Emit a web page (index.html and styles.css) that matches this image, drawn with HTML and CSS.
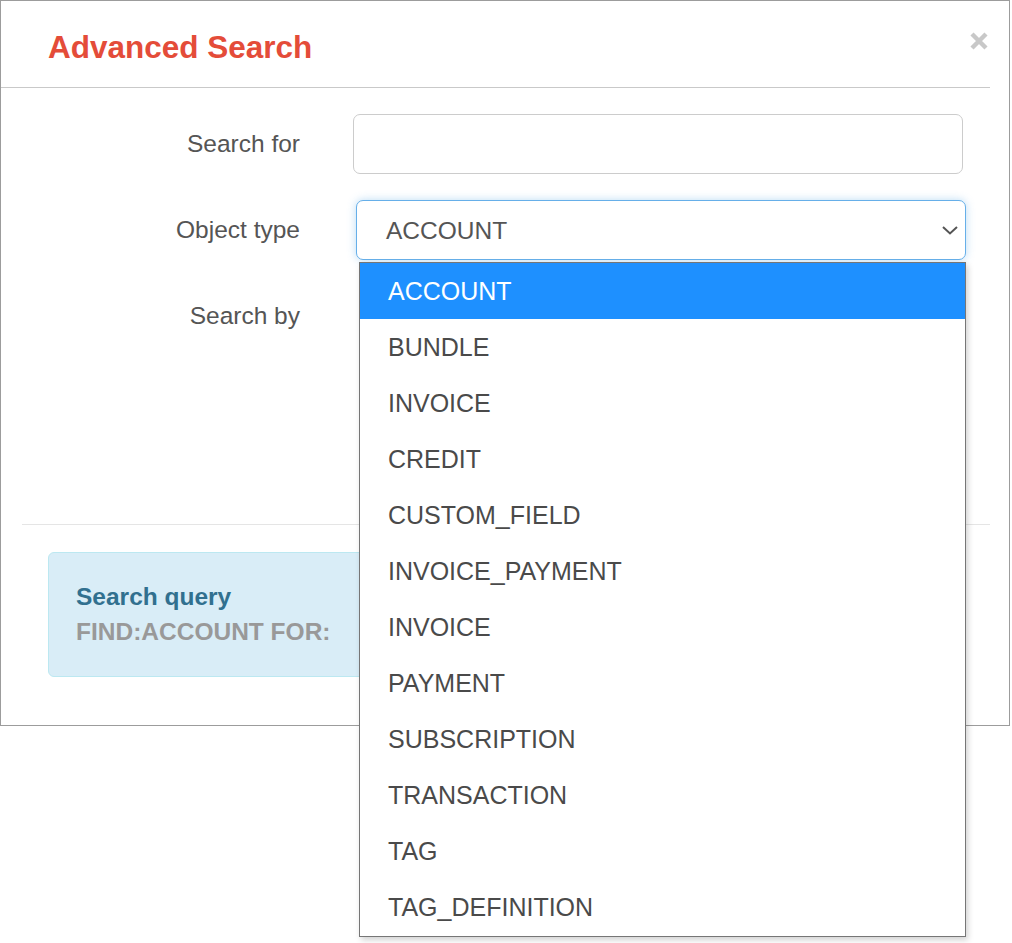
FILE: index.html
```html
<!DOCTYPE html>
<html>
<head>
<meta charset="utf-8">
<link rel="stylesheet" href="styles.css">
</head>
<body>
<div class="modal">
  <div class="modal-header">
    <h4 class="modal-title">Advanced Search</h4>
    <span class="close" aria-label="Close">
      <svg width="18" height="18" viewBox="0 0 18 18"><path d="M2 2 L16 16 M16 2 L2 16" stroke="#c8c8c8" stroke-width="4.4" stroke-linecap="butt" fill="none"/></svg>
    </span>
  </div>
  <div class="modal-body">
    <div class="form-row">
      <label class="form-label">Search for</label>
      <div class="form-control input"></div>
    </div>
    <div class="form-row">
      <label class="form-label">Object type</label>
      <div class="form-control select">
        <span class="select-value">ACCOUNT</span>
        <svg class="chevron" width="16" height="9" viewBox="0 0 16 9"><polyline points="1,1 8,7.5 15,1" fill="none" stroke="#555" stroke-width="2"/></svg>
      </div>
    </div>
    <div class="form-row tall">
      <label class="form-label">Search by</label>
      <div class="hidden-area"></div>
    </div>
  </div>
  <hr class="divider">
  <div class="alert">
    <div class="alert-title">Search query</div>
    <div class="alert-query">FIND:ACCOUNT FOR:</div>
  </div>
</div>

<ul class="dropdown">
  <li class="option active">ACCOUNT</li>
  <li class="option">BUNDLE</li>
  <li class="option">INVOICE</li>
  <li class="option">CREDIT</li>
  <li class="option">CUSTOM_FIELD</li>
  <li class="option">INVOICE_PAYMENT</li>
  <li class="option">INVOICE</li>
  <li class="option">PAYMENT</li>
  <li class="option">SUBSCRIPTION</li>
  <li class="option">TRANSACTION</li>
  <li class="option">TAG</li>
  <li class="option">TAG_DEFINITION</li>
</ul>
</body>
</html>
```

FILE: styles.css
```css
* { box-sizing: border-box; }
html, body {
  margin: 0;
  padding: 0;
  background: #fff;
  font-family: "Liberation Sans", Arial, sans-serif;
  color: #555;
}
body { position: relative; width: 1012px; height: 943px; overflow: hidden; }

.modal {
  width: 1010px;
  height: 726px;
  border: 1px solid #9c9c9c;
  background: #fff;
}

.modal-header {
  position: relative;
  margin-right: 19px;
  height: 87px;
  padding: 0 0 0 47px;
  border-bottom: 1px solid #c9c9c9;
  display: flex;
  align-items: center;
}
.modal-title {
  margin: 0;
  padding-top: 6px;
  font-size: 31.5px;
  font-weight: bold;
  line-height: 1.1;
  color: #e44c39;
}
.close {
  position: absolute;
  right: 2px;
  top: 31px;
  width: 18px;
  height: 18px;
  display: block;
}
.close svg { display: block; }

.modal-body {
  padding-top: 26px;
}
.form-row {
  display: grid;
  grid-template-columns: 299px 610px;
  column-gap: 53px;
  margin-bottom: 26px;
  height: 60px;
}
.form-row.tall { height: 212px; }
.form-label {
  text-align: right;
  font-size: 24.5px;
  line-height: 35px;
  padding-top: 12px;
  color: #555;
}
.form-control {
  height: 60px;
  border: 1px solid #cccccc;
  border-radius: 7px;
  background: #fff;
}
.select {
  width: 610px;
  margin-left: 3px;
  border-color: #66afe9;
  box-shadow: 0 0 8px rgba(102, 175, 233, 0.45);
  display: flex;
  align-items: center;
  justify-content: space-between;
  padding: 0 7px 0 29px;
}
.select-value {
  font-size: 24.5px;
  color: #555;
  padding-top: 1px;
}
.chevron { display: block; margin-top: 1px; }

.divider {
  margin: 0 19px 0 21px;
  border: 0;
  border-top: 1px solid #e5e5e5;
  height: 0;
}

.alert {
  margin: 27px 46px 0 47px;
  height: 125px;
  padding: 26px 26px 26px 27px;
  background: #d9edf7;
  border: 1px solid #bce8f1;
  border-radius: 6px;
  font-size: 24.5px;
  line-height: 35px;
  font-weight: bold;
}
.alert-title { color: #31708f; }
.alert-query { color: #999; }

.dropdown {
  position: absolute;
  left: 359px;
  top: 262px;
  width: 607px;
  margin: 0;
  padding: 0 0 1px 0;
  list-style: none;
  background: #fff;
  border: 1px solid #767676;
  box-shadow: 2px 3px 6px rgba(0, 0, 0, 0.18);
}
.option {
  height: 56px;
  line-height: 57px;
  padding: 0 0 0 28px;
  font-size: 25px;
  color: #4a4a4a;
}
.option.active {
  background: #1e90ff;
  color: #fff;
}
```
